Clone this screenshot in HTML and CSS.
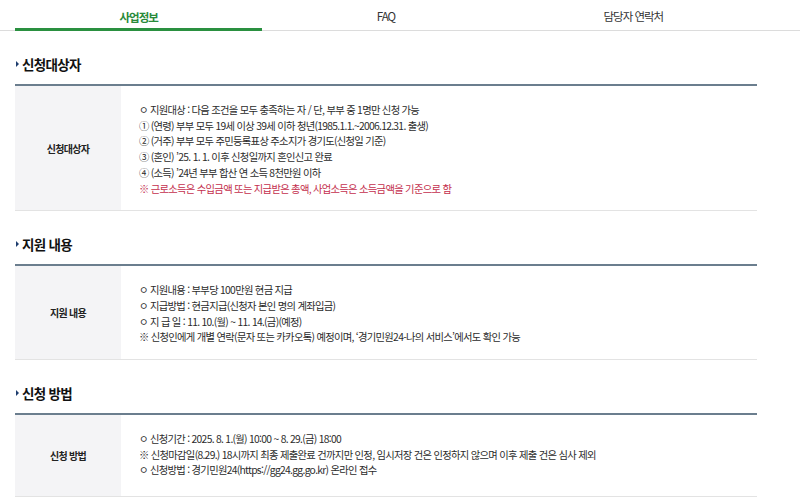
FILE: index.html
```html
<!DOCTYPE html>
<html lang="ko">
<head>
<meta charset="utf-8">
<link rel="stylesheet" href="styles.css">
</head>
<body>
<nav class="tabs">
  <a class="tab active">사업정보</a>
  <a class="tab">FAQ</a>
  <a class="tab">담당자 연락처</a>
</nav>

<section class="sec">
  <h2 class="sec-title">신청대상자</h2>
  <div class="tbl">
    <div class="th">신청대상자</div>
    <div class="td">
      <p>ㅇ 지원대상 : 다음 조건을 모두 충족하는 자 / 단, 부부 중 1명만 신청 가능</p>
      <p>① (연령) 부부 모두 19세 이상 39세 이하 청년(1985.1.1.~2006.12.31. 출생)</p>
      <p>② (거주) 부부 모두 주민등록표상 주소지가 경기도(신청일 기준)</p>
      <p>③ (혼인) ’25. 1. 1. 이후 신청일까지 혼인신고 완료</p>
      <p>④ (소득) ’24년 부부 합산 연 소득 8천만원 이하</p>
      <p class="red">※ 근로소득은 수입금액 또는 지급받은 총액, 사업소득은 소득금액을 기준으로 함</p>
    </div>
  </div>
</section>

<section class="sec">
  <h2 class="sec-title">지원 내용</h2>
  <div class="tbl">
    <div class="th">지원 내용</div>
    <div class="td">
      <p>ㅇ 지원내용 : 부부당 100만원 현금 지급</p>
      <p>ㅇ 지급방법 : 현금지급(신청자 본인 명의 계좌입금)</p>
      <p>ㅇ 지 급 일 : 11. 10.(월) ~ 11. 14.(금)(예정)</p>
      <p>※ 신청인에게 개별 연락(문자 또는 카카오톡) 예정이며, ‘경기민원24-나의 서비스’에서도 확인 가능</p>
    </div>
  </div>
</section>

<section class="sec">
  <h2 class="sec-title">신청 방법</h2>
  <div class="tbl last">
    <div class="th">신청 방법</div>
    <div class="td">
      <p>ㅇ 신청기간 : 2025. 8. 1.(월) 10:00 ~ 8. 29.(금) 18:00</p>
      <p>※ 신청마감일(8.29.) 18시까지 최종 제출완료 건까지만 인정, 임시저장 건은 인정하지 않으며 이후 제출 건은 심사 제외</p>
      <p>ㅇ 신청방법 : 경기민원24(https://gg24.gg.go.kr) 온라인 접수</p>
    </div>
  </div>
</section>
</body>
</html>
```

FILE: styles.css
```css
* { box-sizing: border-box; }
html, body { margin: 0; padding: 0; background: #fff; }
body {
  font-family: "Noto Sans CJK KR", "Noto Sans", sans-serif;
  color: #333;
  overflow: hidden;
}
.tabs {
  display: grid;
  grid-template-columns: repeat(3, 1fr);
  padding: 0 43px 0 15px;
  border-bottom: 1px solid #dcdcdc;
  height: 31px;
}
.tab {
  display: flex;
  align-items: center;
  justify-content: center;
  font-size: 11.5px;
  color: #333;
  height: 30px;
  padding-top: 2px;
  letter-spacing: -1px;
}
.tab.active {
  color: #2a8a3b;
  font-weight: bold;
  border-bottom: 3px solid #2a9040;
  height: 31px;
  padding-top: 5px;
}
.sec { padding: 0 43px 0 15px; }
.sec-title {
  margin: 0;
  height: 53px;
  display: flex;
  align-items: center;
  padding-top: 12px;
  font-size: 13.5px;
  font-weight: bold;
  color: #111;
  letter-spacing: -0.7px;
}
.sec-title::before {
  content: "";
  display: inline-block;
  width: 0; height: 0;
  border-left: 3px solid #1e3d6e;
  border-top: 3px solid transparent;
  border-bottom: 3px solid transparent;
  margin: 0 3px 0 1px;
}
.tbl {
  display: flex;
  border-top: 2px solid #6b7e8e;
  border-bottom: 1px solid #e3e3e3;
}
.th {
  width: 106px;
  flex: none;
  background: #f4f4f6;
  display: flex;
  align-items: center;
  justify-content: center;
  font-size: 10px;
  font-weight: bold;
  color: #222;
  letter-spacing: -0.7px;
}
.td {
  padding: 16px 0 14px 18px;
  font-size: 10.3px;
  line-height: 15.7px;
  letter-spacing: -0.7px;
  color: #2b2b2b;
}
.tbl.last .td { padding-bottom: 18px; }
.td p { margin: 0; }
.td .red { color: #c4304e; }
```
